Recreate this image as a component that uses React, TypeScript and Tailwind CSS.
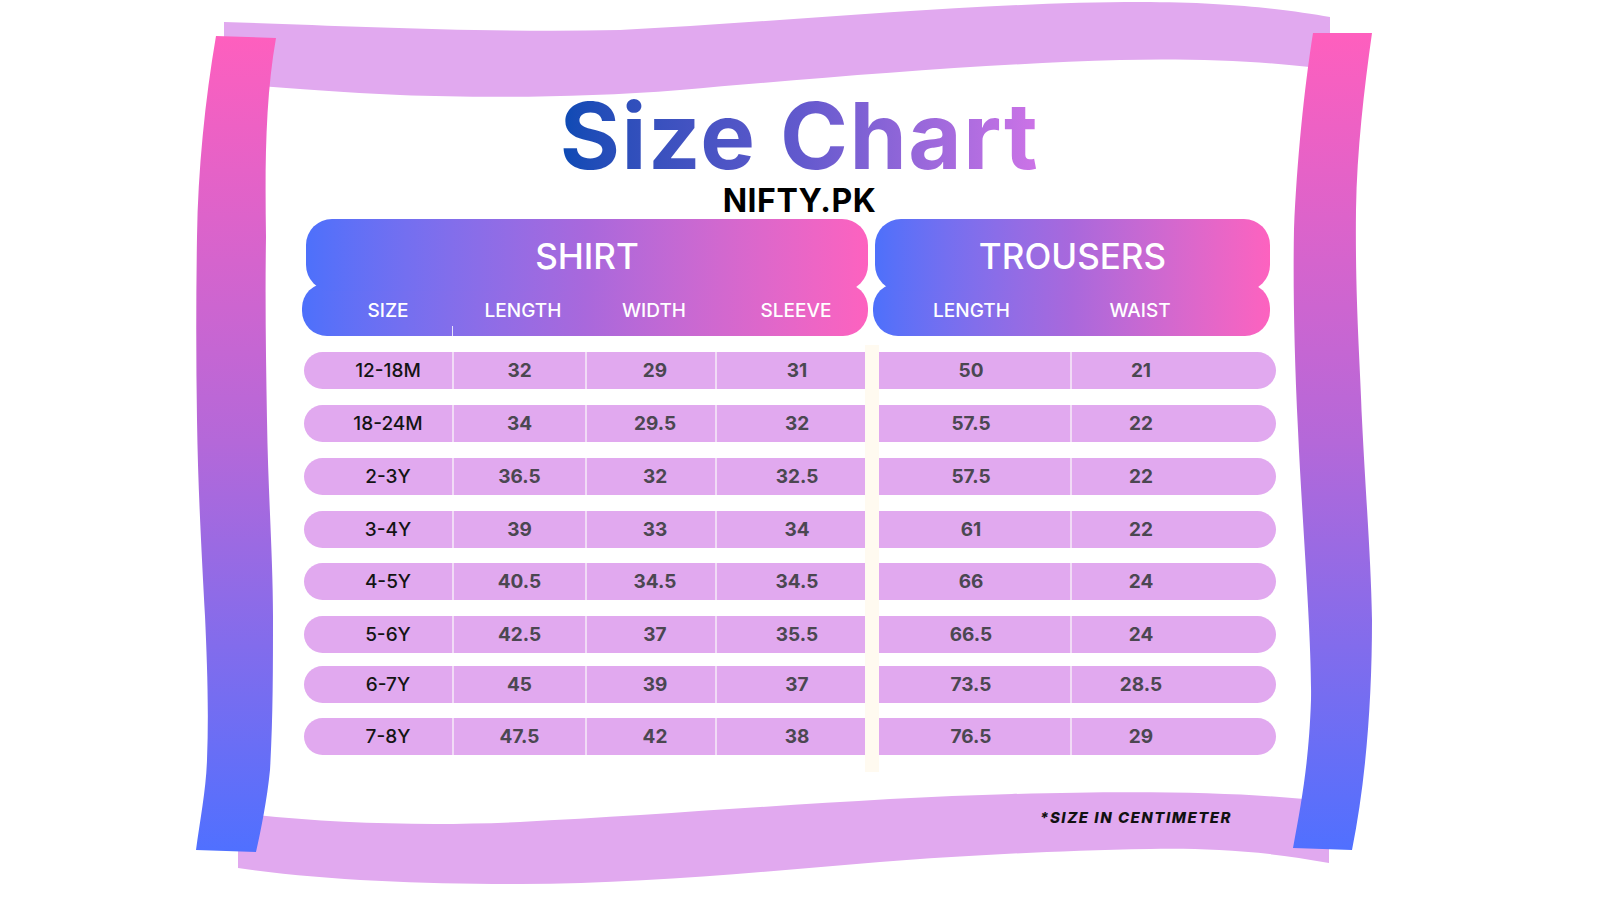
import React from "react";

const rows = [
  { size: "12-18M", shirt: ["32", "29", "31"], trousers: ["50", "21"], gap: "mt-0" },
  { size: "18-24M", shirt: ["34", "29.5", "32"], trousers: ["57.5", "22"], gap: "mt-[16px]" },
  { size: "2-3Y", shirt: ["36.5", "32", "32.5"], trousers: ["57.5", "22"], gap: "mt-[16px]" },
  { size: "3-4Y", shirt: ["39", "33", "34"], trousers: ["61", "22"], gap: "mt-[16px]" },
  { size: "4-5Y", shirt: ["40.5", "34.5", "34.5"], trousers: ["66", "24"], gap: "mt-[15px]" },
  { size: "5-6Y", shirt: ["42.5", "37", "35.5"], trousers: ["66.5", "24"], gap: "mt-[16px]" },
  { size: "6-7Y", shirt: ["45", "39", "37"], trousers: ["73.5", "28.5"], gap: "mt-[13px]" },
  { size: "7-8Y", shirt: ["47.5", "42", "38"], trousers: ["76.5", "29"], gap: "mt-[15px]" },
];

function Frame() {
  return (
    <svg
      className="absolute inset-0"
      width="1599"
      height="899"
      viewBox="0 0 1599 899"
      aria-hidden="true"
    >
      <defs>
        <linearGradient id="bar" x1="0" y1="35" x2="0" y2="850" gradientUnits="userSpaceOnUse">
          <stop offset="0" stopColor="#fe5fbe" />
          <stop offset="0.5" stopColor="#b468d9" />
          <stop offset="1" stopColor="#5070ff" />
        </linearGradient>
      </defs>
      {/* top and bottom ribbons */}
      <path
        fill="#e1a9ef"
        d="M224,22 C330,25 470,33 620,30 C780,22 980,2 1140,2 C1230,2 1290,10 1330,17 L1330,70 C1280,62 1200,58 1120,60 C980,64 820,78 680,90 C580,98 480,98 400,95 C330,92 270,86 224,84 Z"
      />
      <path
        fill="#e1a9ef"
        d="M238,813 C330,824 430,826 520,822 C680,814 860,798 1012,794 C1160,790 1260,793 1329,802 L1329,863 C1260,850 1200,848 1150,849 C1040,851 960,856 880,862 C760,872 640,884 520,884 C420,884 320,880 238,868 Z"
      />
      {/* side bars */}
      <path
        fill="url(#bar)"
        d="M216,36 L276,38 C265,100 265,170 266,237 C265,300 266,360 267,420 C268,490 273,560 273,616 C273,670 273,720 270,770 C267,800 261,830 256,852 L196,850 C200,820 206,790 207,760 C209,710 207,660 205,616 C202,560 198,490 197,420 C196,360 196,300 197,237 C198,170 205,100 216,36 Z"
      />
      <path
        fill="url(#bar)"
        d="M1313,33 L1372,33 C1364,90 1357,150 1356,210 C1355,300 1360,360 1362,420 C1366,500 1371,560 1372,620 C1372,700 1366,780 1352,850 L1293,848 C1302,800 1309,760 1311,700 C1312,640 1302,520 1298,430 C1294,350 1293,280 1294,229 C1297,160 1304,90 1313,33 Z"
      />
    </svg>
  );
}

export default function App() {
  return (
    <div className="relative h-[899px] w-full overflow-hidden bg-white font-[Inter,sans-serif]">
      <Frame />
      <div className="relative flex flex-col">
        <div className="flex flex-col items-center pt-[96px]">
          <h1 className="inline-block bg-linear-to-r from-[#0a4ab4] via-[#6259cd] to-[#cd73e7] bg-clip-text text-[92px] font-bold leading-[80px] tracking-[1.5px] text-transparent">
            Size Chart
          </h1>
          <p className="mt-[9px] text-[32px] font-bold leading-none tracking-[0.5px] text-black">
            NIFTY.PK
          </p>
        </div>

        {/* headers */}
        <div className="mt-[2px] flex gap-[5px] pl-[302px] text-white">
          <div className="flex w-[566px] flex-col">
            <div className="relative z-10 ml-[4px] flex h-[72px] w-[562px] items-center justify-center rounded-[26px] bg-linear-to-r from-[#4d70fb] via-[#a968dc] to-[#fd62bf] pt-[2px] text-[35px] font-medium">
              SHIRT
            </div>
            <div className="relative -mt-[8px] grid h-[53px] w-[566px] grid-cols-[150px_133px_130px_153px] items-center rounded-[25px] bg-linear-to-r from-[#4d70fb] via-[#a968dc] to-[#fd62bf] pt-[4px] text-[19px] font-medium">
              <span className="pl-[22px] text-center">SIZE</span>
              <span className="pl-[9px] text-center">LENGTH</span>
              <span className="pl-[8px] text-center">WIDTH</span>
              <span className="pl-[9px] text-center">SLEEVE</span>
              <span className="absolute bottom-0 left-[150px] h-[10px] w-px bg-white/80" />
            </div>
          </div>
          <div className="flex w-[397px] flex-col">
            <div className="relative z-10 ml-[2px] flex h-[72px] w-[395px] items-center justify-center rounded-[26px] bg-linear-to-r from-[#4d70fb] via-[#a968dc] to-[#fd62bf] pt-[2px] text-[35px] font-medium">
              TROUSERS
            </div>
            <div className="-mt-[8px] grid h-[53px] w-[397px] grid-cols-[197px_200px] items-center rounded-[25px] bg-linear-to-r from-[#4d70fb] via-[#a968dc] to-[#fd62bf] pt-[4px] text-[19px] font-medium">
              <span className="text-center">LENGTH</span>
              <span className="pr-[60px] text-center">WAIST</span>
            </div>
          </div>
        </div>

        {/* rows */}
        <div className="mt-[9px] flex pl-[304px] text-[19px] leading-none">
          <div className="flex w-[561px] flex-col pt-[7px] pb-[17px]">
            {rows.map((r) => (
              <div
                key={r.size}
                className={`${r.gap} grid h-[37px] grid-cols-[148px_133px_130px_150px] rounded-l-full bg-[#e1a9ef]`}
              >
                <div className="flex items-center justify-center pl-[20px] font-medium text-[#141414]">
                  {r.size}
                </div>
                <div className="flex items-center justify-center border-l-2 border-[#f1dbf6] font-bold text-[#4b4751]">
                  {r.shirt[0]}
                </div>
                <div className="flex items-center justify-center border-l-2 border-[#f1dbf6] pl-[8px] font-bold text-[#4b4751]">
                  {r.shirt[1]}
                </div>
                <div className="flex items-center justify-center border-l-2 border-[#f1dbf6] pl-[12px] font-bold text-[#4b4751]">
                  {r.shirt[2]}
                </div>
              </div>
            ))}
          </div>
          <div className="w-[14px] bg-[#fffaf0]" />
          <div className="flex w-[397px] flex-col pt-[7px] pb-[17px]">
            {rows.map((r) => (
              <div
                key={r.size}
                className={`${r.gap} grid h-[37px] grid-cols-[191px_206px] rounded-r-full bg-[#e1a9ef] font-bold text-[#4b4751]`}
              >
                <div className="flex items-center justify-center pr-[7px]">{r.trousers[0]}</div>
                <div className="flex items-center justify-center border-l-2 border-[#f1dbf6] pr-[66px]">
                  {r.trousers[1]}
                </div>
              </div>
            ))}
          </div>
        </div>

        <div className="mt-[38px] flex justify-end pr-[367px]">
          <p className="text-[15px] font-extrabold italic leading-none tracking-[1.5px] text-[#111]">
            *SIZE IN CENTIMETER
          </p>
        </div>
      </div>
    </div>
  );
}
